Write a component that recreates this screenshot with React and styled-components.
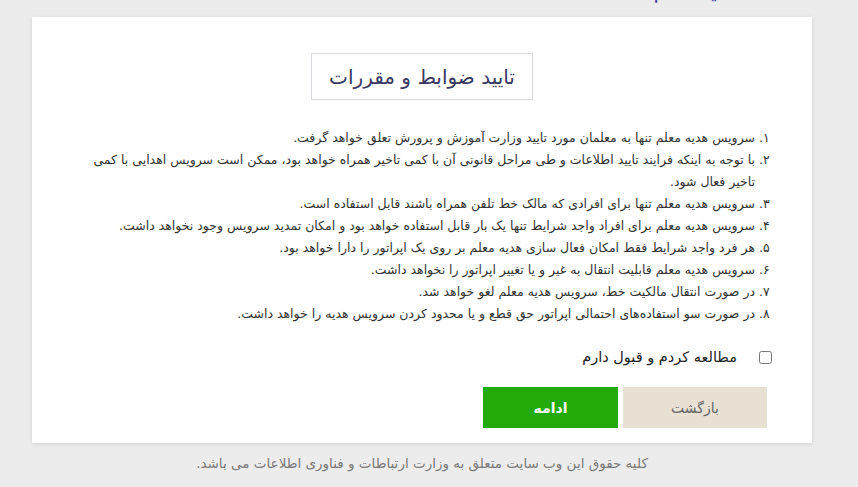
import React, { useState } from 'react'
import styled, { createGlobalStyle } from 'styled-components'

const GlobalStyle = createGlobalStyle`
  html, body {
    margin: 0;
    padding: 0;
    background: #ececec;
  }
  body {
    font-family: "DejaVu Sans", "Noto Sans", sans-serif;
  }
`

const Page = styled.div`
  direction: rtl;
  width: 858px;
  height: 487px;
  overflow: hidden;
  background: #ececec;
`

// page heading, scrolled mostly out of view above the card
const TopTitle = styled.div`
  height: 26px;
  margin-top: -9px;
  padding-right: 58px;
  color: #4a3fa6;
  font-size: 20px;
  line-height: 0px;
`

const Card = styled.div`
  width: 780px;
  margin-right: 46px;
  background: #fff;
  box-shadow: 0 1px 4px rgba(0, 0, 0, 0.12);
  padding: 36px 40px 15px 40px;
  box-sizing: border-box;
`

const TitleWrap = styled.div`
  display: flex;
  justify-content: center;
`

const TitleBox = styled.h1`
  margin: 0;
  width: 222px;
  height: 47px;
  box-sizing: border-box;
  border: 1px solid #d9d9df;
  display: flex;
  align-items: center;
  justify-content: center;
  font-weight: normal;
  font-size: 20px;
  color: #383860;
`

const Rules = styled.ol`
  list-style-type: persian;
  margin: 27px 0 0 0;
  padding: 0 17px 0 0;
  color: #333;
  font-size: 12.5px;
  line-height: 22px;
`

const Rule = styled.li`
  padding-right: 0;
`

const Agree = styled.label`
  display: flex;
  align-items: center;
  gap: 22px;
  margin: 20px 0 0 0;
  font-size: 14.5px;
  color: #222;
  line-height: 24px;
`

const Check = styled.input`
  width: 13px;
  height: 13px;
  margin: 0;
`

const Actions = styled.div`
  display: flex;
  gap: 5px;
  margin-top: 18px;
  padding-right: 5px;
`

const Button = styled.button`
  height: 41px;
  width: ${(p) => p.$w}px;
  border: none;
  border-radius: 0;
  font-family: "DejaVu Sans", sans-serif;
  font-size: 14px;
  font-weight: ${(p) => (p.$primary ? 'bold' : 'normal')};
  background: ${(p) => (p.$primary ? '#23aa08' : '#e8e0d3')};
  color: ${(p) => (p.$primary ? '#fff' : '#666')};
  cursor: pointer;
`

const Footer = styled.p`
  margin: 12px 46px 0 0;
  width: 780px;
  text-align: center;
  color: #7a7a7a;
  font-size: 13.5px;
`

const rules = [
  'سرویس هدیه معلم تنها به معلمان مورد تایید وزارت آموزش و پرورش تعلق خواهد گرفت.',
  'با توجه به اینکه فرایند تایید اطلاعات و طی مراحل قانونی آن با کمی تاخیر همراه خواهد بود، ممکن است سرویس اهدایی با کمی تاخیر فعال شود.',
  'سرویس هدیه معلم تنها برای افرادی که مالک خط تلفن همراه باشند قابل استفاده است.',
  'سرویس هدیه معلم برای افراد واجد شرایط تنها یک بار قابل استفاده خواهد بود و امکان تمدید سرویس وجود نخواهد داشت.',
  'هر فرد واجد شرایط فقط امکان فعال سازی هدیه معلم بر روی یک اپراتور را دارا خواهد بود.',
  'سرویس هدیه معلم قابلیت انتقال به غیر و یا تغییر اپراتور را نخواهد داشت.',
  'در صورت انتقال مالکیت خط، سرویس هدیه معلم لغو خواهد شد.',
  'در صورت سو استفاده‌های احتمالی اپراتور حق قطع و یا محدود کردن سرویس هدیه را خواهد داشت.',
]

export default function App() {
  const [agreed, setAgreed] = useState(false)

  return (
    <Page>
      <GlobalStyle />
      <TopTitle>سامانه هدیه معلم</TopTitle>
      <Card>
        <TitleWrap>
          <TitleBox>تایید ضوابط و مقررات</TitleBox>
        </TitleWrap>
        <Rules>
          {rules.map((r, i) => (
            <Rule key={i}>{r}</Rule>
          ))}
        </Rules>
        <Agree>
          <Check type="checkbox" checked={agreed} onChange={(e) => setAgreed(e.target.checked)} />
          مطالعه کردم و قبول دارم
        </Agree>
        <Actions>
          <Button $w={144}>بازگشت</Button>
          <Button $w={135} $primary>ادامه</Button>
        </Actions>
      </Card>
      <Footer>کلیه حقوق این وب سایت متعلق به وزارت ارتباطات و فناوری اطلاعات می باشد.</Footer>
    </Page>
  )
}
